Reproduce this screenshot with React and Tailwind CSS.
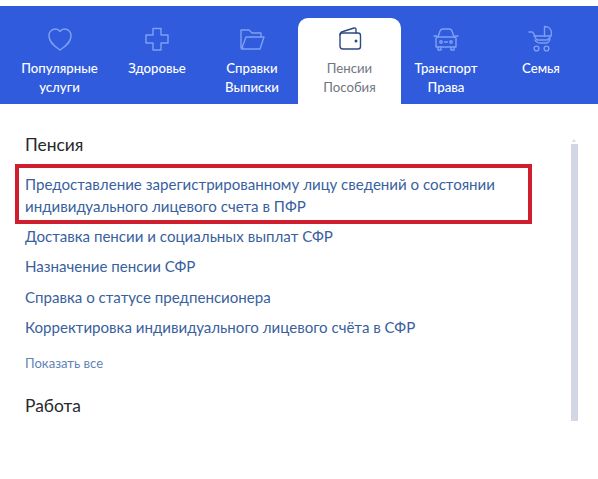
const Stroke = ({ children, className }) => (
  <svg width="30" height="30" viewBox="0 0 30 30" fill="none" stroke="currentColor" strokeWidth="1.4" strokeLinecap="round" strokeLinejoin="round" className={className}>
    {children}
  </svg>
);

const icons = {
  heart: <path d="M15 26 C9 22 4 18 4 11.5 C4 7.5 7 5 10.5 5 C12.5 5 14 6 15 7.5 C16 6 17.5 5 19.5 5 C23 5 26 7.5 26 11.5 C26 18 21 22 15 26 Z" />,
  plus: <path d="M11 4.5 H19 V11 H26 V19 H19 V26 H11 V19 H4 V11 H11 Z" />,
  folder: (
    <>
      <path d="M6 24 H4 V6 H12 L15 9 H24 V13" />
      <path d="M9 13 H27 L23 25 H4.5 Z" />
    </>
  ),
  wallet: (
    <>
      <path d="M5 11 C5 9 6 8 8 7.5 L19 4 C20.5 3.6 21 4.5 21 5.5 V9" />
      <path d="M5 11 C5 10 6 9 8 9 H23 C24.5 9 25.5 10 25.5 11.5 V22.5 C25.5 24 24.5 25 23 25 H8 C6 25 5 24 5 22 Z" />
      <circle cx="21" cy="17" r="0.8" fill="currentColor" />
    </>
  ),
  car: (
    <>
      <path d="M7 13 L9 7 C9.5 5.5 10.5 5 12 5 H18 C19.5 5 20.5 5.5 21 7 L23 13" />
      <path d="M5 14 C5 13.4 6 13 7 13 H23 C24 13 25 13.4 25 14 V23 H5 Z" />
      <path d="M7 23 V26 H10 V23 M20 23 V26 H23 V23 M3 12 H6 M24 12 H27" />
      <circle cx="10" cy="18" r="1.2" />
      <circle cx="20" cy="18" r="1.2" />
      <path d="M13.5 18 H16.5" />
    </>
  ),
  stroller: (
    <>
      <path d="M3 8 H6 C7 8 7.5 9 8 10 C9 13 9 14 11 16 H21 C24 14 25.5 12 25.5 9 C25.5 5 22.5 2.5 18.5 2.5 V12" />
      <path d="M8 12 H25" />
      <path d="M9 16 C10 18 12 19 15 19 H20 C22 19 23 18 24 15" />
      <circle cx="10.5" cy="24.5" r="2.4" />
      <circle cx="20.5" cy="24.5" r="2.4" />
    </>
  ),
};

const tabs = [
  { w: "w-[97px]", icon: "heart", lines: ["Популярные", "услуги"] },
  { w: "w-[98px]", icon: "plus", lines: ["Здоровье"] },
  { w: "w-[92px]", icon: "folder", lines: ["Справки", "Выписки"] },
  { w: "w-[103px]", icon: "wallet", lines: ["Пенсии", "Пособия"], active: true },
  { w: "w-[90px]", icon: "car", lines: ["Транспорт", "Права"] },
  { w: "w-[100px]", icon: "stroller", lines: ["Семья"] },
];

const links = [
  "Доставка пенсии и социальных выплат СФР",
  "Назначение пенсии СФР",
  "Справка о статусе предпенсионера",
  "Корректировка индивидуального лицевого счёта в СФР",
];

export default function App() {
  return (
    <div className="w-[598px] h-[479px] bg-white overflow-hidden pt-[6px] font-['Lato','Noto_Sans',sans-serif]">
      <nav className="h-[98px] bg-[#2f5bdc] flex items-end pl-[11px]">
        {tabs.map((t) => (
          <div
            key={t.icon}
            className={
              t.active
                ? `${t.w} h-[86px] bg-white rounded-t-[10px] flex flex-col items-center pt-[6px] text-[#70767f]`
                : `${t.w} h-[86px] flex flex-col items-center pt-[6px] text-white`
            }
          >
            <Stroke className={t.active ? "text-[#2d4a82]" : "text-[#7fa0f2]"}>{icons[t.icon]}</Stroke>
            <div className={`mt-[5px] text-center text-[13.2px] leading-[19px] ${t.active ? "" : "font-medium"}`}>
              {t.lines.map((l) => (
                <div key={l}>{l}</div>
              ))}
            </div>
          </div>
        ))}
      </nav>

      <main className="flex pl-[25px]">
        <div className="w-[545px] pt-[31px]">
          <h2 className="text-[17.4px] leading-[20px] text-[#26282c]">Пенсия</h2>
          <div className="ml-[-10px] mt-[9px] w-[517px] h-[60px] border-[4px] border-[#cf1f2e] pl-[6px] pt-[5px] text-[15.1px] leading-[22px] text-[#3a5f9e]">
            <div>Предоставление зарегистрированному лицу сведений о состоянии</div>
            <div>индивидуального лицевого счета в ПФР</div>
          </div>
          <ul className="mt-[1px] text-[15.1px] leading-[22px] text-[#3a5f9e] flex flex-col gap-[8.3px]">
            {links.map((l) => (
              <li key={l}>{l}</li>
            ))}
          </ul>
          <div className="mt-[17px] text-[13.1px] leading-[16px] text-[#5f85b5]">Показать все</div>
          <h2 className="mt-[25px] text-[17.4px] leading-[20px] text-[#26282c]">Работа</h2>
        </div>
        <div className="pt-[35px] w-[8px] flex flex-col items-center">
          <div className="w-0 h-0 border-x-[2px] border-x-transparent border-b-[3px] border-b-[#d8dbe6] mb-[2px]" />
          <div className="w-[7px] h-[277px] bg-[#d3d6e4]" />
        </div>
      </main>
    </div>
  );
}
